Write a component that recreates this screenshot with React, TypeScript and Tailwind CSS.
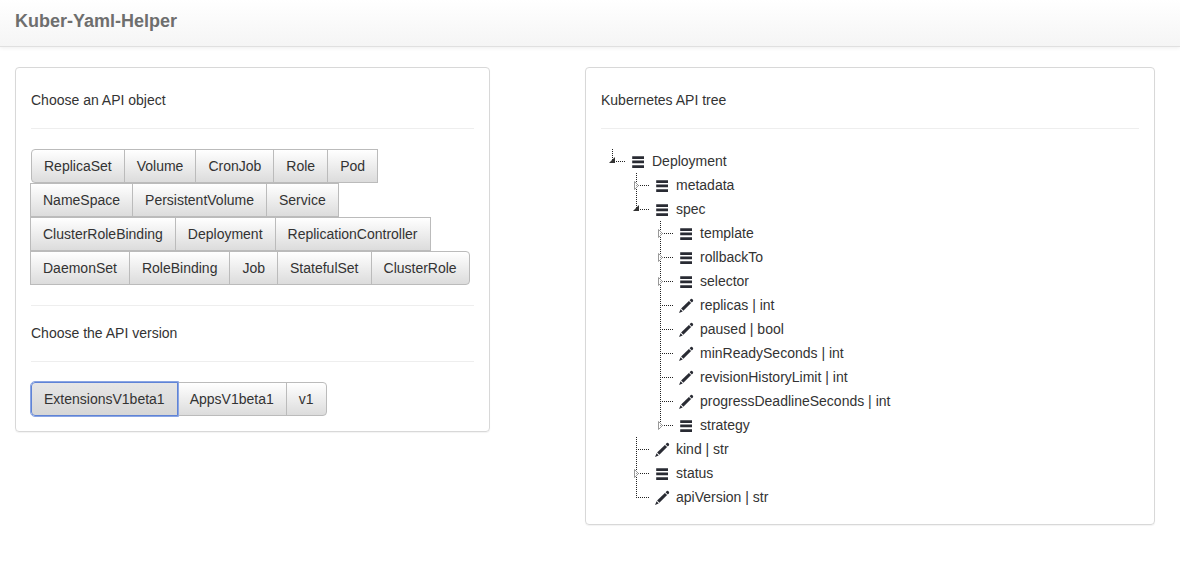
import { useState } from "react";

type TreeNode = {
  name: string;
  type?: string;
  open?: boolean;
  children?: TreeNode[];
};

const apiObjects = [
  "ReplicaSet", "Volume", "CronJob", "Role", "Pod",
  "NameSpace", "PersistentVolume", "Service",
  "ClusterRoleBinding", "Deployment", "ReplicationController",
  "DaemonSet", "RoleBinding", "Job", "StatefulSet", "ClusterRole",
];

const apiVersions = ["ExtensionsV1beta1", "AppsV1beta1", "v1"];

const tree: TreeNode = {
  name: "Deployment",
  open: true,
  children: [
    { name: "metadata", children: [] },
    {
      name: "spec",
      open: true,
      children: [
        { name: "template", children: [] },
        { name: "rollbackTo", children: [] },
        { name: "selector", children: [] },
        { name: "replicas", type: "int" },
        { name: "paused", type: "bool" },
        { name: "minReadySeconds", type: "int" },
        { name: "revisionHistoryLimit", type: "int" },
        { name: "progressDeadlineSeconds", type: "int" },
        { name: "strategy", children: [] },
      ],
    },
    { name: "kind", type: "str" },
    { name: "status", children: [] },
    { name: "apiVersion", type: "str" },
  ],
};

function Connector({ node, last }: { node: TreeNode; last: boolean }) {
  const half = last || node.open;
  return (
    <svg width="24" height="24" viewBox="0 0 24 24" fill="none" aria-hidden="true" className="shrink-0">
      <path d={half ? "M11.5 0V13" : "M11.5 0V24"} stroke="#222" strokeDasharray="1 1" />
      <path d="M13 12.5H24" stroke="#222" strokeDasharray="1 1" />
      {node.children && node.open && <path d="M8 14L14 8V14Z" fill="#333" />}
      {node.children && !node.open && <path d="M9.5 8.5L13.5 12.5L9.5 16.5Z" fill="#fff" stroke="#999" />}
      {node.children && !node.open && <path d="M11.5 10V15" stroke="#999" strokeDasharray="1 1" />}
    </svg>
  );
}

function ObjectIcon() {
  return (
    <svg width="16" height="16" viewBox="0 0 16 16" fill="#292b33" aria-hidden="true" className="shrink-0">
      <path d="M2.2 3.2h11.8v2.8H2.2zM2.2 7.6h11.8v2.6H2.2zM2.2 12.2h11.8v2.8H2.2z" />
    </svg>
  );
}

function PencilIcon() {
  return (
    <svg width="16" height="16" viewBox="0 0 16 16" fill="#292b33" aria-hidden="true" className="shrink-0">
      <path d="M1 16L2.6 12.3L4.7 14.4Z" />
      <path d="M3.1 11.5L10.9 3.9L13.1 6.1L5.4 13.8Z" />
      <path d="M11.6 3.2L12.8 2.1Q13.5 1.5 14.2 2.1L14.9 2.8Q15.5 3.5 14.9 4.2L13.8 5.4Z" />
    </svg>
  );
}

function Branch({ node, last }: { node: TreeNode; last: boolean }) {
  return (
    <li>
      <div className="flex h-6 items-center">
        <Connector node={node} last={last} />
        <span className="ml-[5px]">{node.children ? <ObjectIcon /> : <PencilIcon />}</span>
        <span className="ml-[6px]">{node.type ? `${node.name} | ${node.type}` : node.name}</span>
      </div>
      {node.open && node.children && (
        <ul className="ml-6">
          {node.children.map((child, i) => (
            <Branch key={child.name} node={child} last={i === node.children!.length - 1} />
          ))}
        </ul>
      )}
    </li>
  );
}

function ButtonGroup({ label, items, selected, onSelect }: {
  label: string;
  items: string[];
  selected?: string;
  onSelect: (item: string) => void;
}) {
  return (
    <div role="group" aria-label={label} className="flex flex-wrap">
      {items.map((item) => (
        <button
          key={item}
          type="button"
          aria-pressed={item === selected}
          onClick={() => onSelect(item)}
          className={
            "-ml-px border px-3 py-[6px] leading-5 first:ml-0 first:rounded-l last:rounded-r " +
            (item === selected
              ? "relative z-10 border-[#5f83d6] bg-linear-to-b from-[#e6e6e6] to-[#d6d6d6] outline outline-[#8aa5e3]"
              : "border-[#bbb] bg-linear-to-b from-white to-[#dcdcdc]")
          }
        >
          {item}
        </button>
      ))}
    </div>
  );
}

export default function App() {
  const [, setObject] = useState("Deployment");
  const [version, setVersion] = useState("ExtensionsV1beta1");

  return (
    <div className="font-['Liberation_Sans',Arial,sans-serif] text-sm leading-5 text-[#333]">
      <header className="border-b border-[#e0e0e0] bg-linear-to-b from-white to-[#f5f5f5] px-[15px] pt-[11px] pb-[15px] shadow-[0_1px_4px_rgba(0,0,0,0.07)]">
        <h1 className="text-lg leading-5 font-bold text-[#6e6e6e]">Kuber-Yaml-Helper</h1>
      </header>
      <main className="grid grid-cols-[5fr_1fr_6fr] items-start pt-5 pr-[25px] pb-8 pl-[15px]">
        <section className="rounded border border-[#d8d8d8] p-[15px] shadow-[0_1px_1px_rgba(0,0,0,0.05)]">
          <h2 className="mt-[7px] mb-[18px]">Choose an API object</h2>
          <hr className="mb-5 border-[#eee]" />
          <ButtonGroup label="API object" items={apiObjects} onSelect={setObject} />
          <hr className="mt-5 border-[#eee]" />
          <h2 className="mt-[17px] mb-[18px]">Choose the API version</h2>
          <hr className="mb-5 border-[#eee]" />
          <ButtonGroup label="API version" items={apiVersions} selected={version} onSelect={setVersion} />
        </section>
        <section className="col-start-3 rounded border border-[#d8d8d8] p-[15px] shadow-[0_1px_1px_rgba(0,0,0,0.05)]">
          <h2 className="mt-[7px] mb-[18px]">Kubernetes API tree</h2>
          <hr className="mb-5 border-[#eee]" />
          <ul>
            <Branch node={tree} last />
          </ul>
        </section>
      </main>
    </div>
  );
}
